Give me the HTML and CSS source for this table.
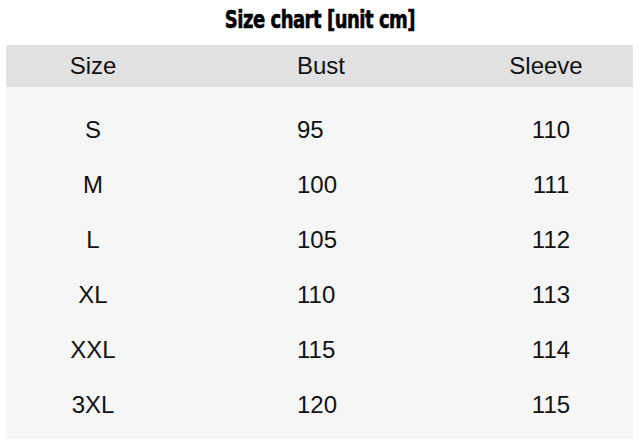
FILE: index.html
```html
<!DOCTYPE html>
<html>
<head>
<meta charset="utf-8">
<link rel="stylesheet" href="styles.css">
</head>
<body>
<div class="page">
  <h1 class="title"><span class="title-text">Size chart [unit cm]</span></h1>
  <div class="chart">
    <div class="row head">
      <div class="c1">Size</div><div class="c2">Bust</div><div class="c3">Sleeve</div>
    </div>
    <div class="body">
      <div class="row"><div class="c1">S</div><div class="c2">95</div><div class="c3 v">110</div></div>
      <div class="row"><div class="c1">M</div><div class="c2">100</div><div class="c3 v">111</div></div>
      <div class="row"><div class="c1">L</div><div class="c2">105</div><div class="c3 v">112</div></div>
      <div class="row"><div class="c1">XL</div><div class="c2">110</div><div class="c3 v">113</div></div>
      <div class="row"><div class="c1">XXL</div><div class="c2">115</div><div class="c3 v">114</div></div>
      <div class="row"><div class="c1">3XL</div><div class="c2">120</div><div class="c3 v">115</div></div>
    </div>
  </div>
</div>
</body>
</html>
```
FILE: styles.css
```css
html, body {
  margin: 0;
  padding: 0;
  background: #ffffff;
}
.page {
  width: 640px;
  height: 446px;
  font-family: "Liberation Sans", Arial, sans-serif;
  color: #111;
}
.title {
  margin: 0;
  height: 45px;
  box-sizing: border-box;
  padding-bottom: 7px;
  display: flex;
  align-items: center;
  justify-content: center;
  font-family: "DejaVu Sans", sans-serif;
  font-stretch: condensed;
  font-weight: 700;
  font-size: 25px;
  letter-spacing: -0.6px;
  color: #000;
}
.title-text {
  display: inline-block;
  transform: scaleX(0.8);
  -webkit-text-stroke: 0.6px #000;
  white-space: nowrap;
}
.chart {
  margin: 0 7px 0 6px;
}
.row {
  display: grid;
  grid-template-columns: 174px 279px 174px;
  align-items: center;
  font-size: 24px;
  height: 55px;
}
.head {
  background: #e1e1e1;
  height: 42px;
}
.body {
  background: #f6f6f6;
  padding: 15px 0 7px;
}
.c1 { text-align: center; }
.c2 { padding-left: 117px; }
.c3 { text-align: center; }
.c3.v { padding-left: 10px; }
```
